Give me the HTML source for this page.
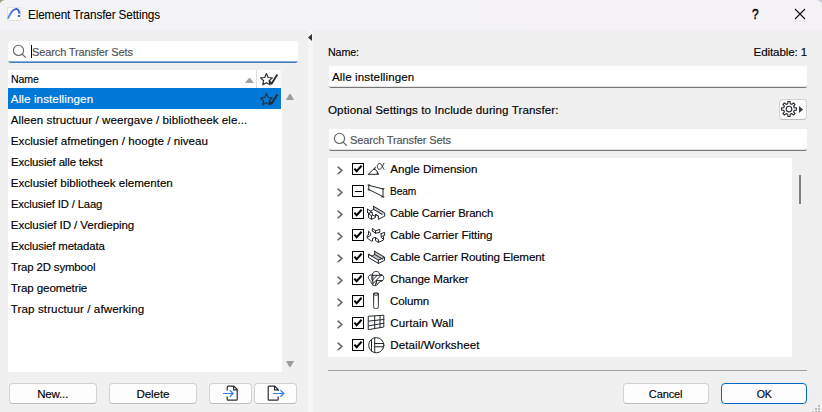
<!DOCTYPE html>
<html><head><meta charset="utf-8"><title>Element Transfer Settings</title>
<style>
*{box-sizing:border-box;margin:0;padding:0}
html,body{width:822px;height:412px;overflow:hidden}
body{background:#f0f0f0;font-family:"Liberation Sans",sans-serif;font-size:11.6px;color:#000;position:relative;-webkit-text-stroke:0.15px currentColor}
.abs{position:absolute}
svg{position:absolute;overflow:visible}
.t{position:absolute;white-space:nowrap;line-height:16px;height:16px;transform-origin:0 50%}
.btn span{display:inline-block;transform-origin:50% 50%}
#titlebar{left:0;top:0;width:822px;height:30px;background:linear-gradient(90deg,#f3f3f5,#f5f2f5)}
#divider{left:308px;top:30px;width:5px;height:382px;background:#f6f6f6}
.field{background:#fff;border-bottom:1px solid #777;border-radius:2px;box-shadow:inset 0 -1px 0 #e4e4e4}
.btn{position:absolute;height:21px;background:#fdfdfd;border:1px solid #d2d2d2;border-bottom-color:#bcbcbc;border-radius:4px;text-align:center;line-height:19px}
.cb{position:absolute;width:12px;height:12px;border:1px solid #000;background:#fff}
.ic{stroke:#23282c;fill:none;stroke-width:1;stroke-linecap:round;stroke-linejoin:round}
</style></head><body>
<div id="titlebar" class="abs"></div>
<div id="divider" class="abs"></div>
<svg style="left:0;top:0" width="6" height="4" viewBox="0 0 6 4"><path d="M0 0 H5 C2.5 0.3 0.5 1.5 0 3.5 Z" fill="#9a9d7c"></path></svg>
<svg style="left:814px;top:0" width="8" height="8" viewBox="0 0 8 8"><path d="M8 0 H2.6 C5.4 0.5 7.4 1.8 8 4 Z" fill="#c9c9d8"></path></svg>

<!-- title -->
<svg style="left:7px;top:7px" width="14" height="14" viewBox="0 0 14 14"><defs><linearGradient id="ag" x1="0" y1="1" x2="1" y2="0"><stop offset="0" stop-color="#5f93f2"></stop><stop offset="1" stop-color="#3558cc"></stop></linearGradient></defs><rect x="0.5" y="0.5" width="13" height="13" fill="#fff" stroke="#e2e2e2" stroke-width="1"></rect><path d="M1 11.6 C3.2 6.4 6.4 1.8 9.4 2 C11.2 2.2 12.1 4 12.3 6.6" fill="none" stroke="url(#ag)" stroke-width="1.9"></path><rect x="10.9" y="8.1" width="1.9" height="1.8" fill="#1c3fb4"></rect></svg>
<span class="t" style="left: 27.6px; top: 6.5px; font-size: 12.2px; -webkit-text-stroke: 0.05px rgb(0, 0, 0); letter-spacing: -0.15px; transform: scaleX(0.9675); margin-right: 0.15px;">Element Transfer Settings</span>
<span class="t" style="left: 751.7px; top: 6px; font-size: 14px; -webkit-text-stroke: 0.45px rgb(0, 0, 0); letter-spacing: -0.15px; transform: scaleX(0.8465); margin-right: 0.15px;">?</span>
<svg style="left:795px;top:9px" width="10" height="10" viewBox="0 0 10 10"><path d="M0 0 L10 10 M10 0 L0 10" stroke="#111" stroke-width="1.1" fill="none"></path></svg>

<!-- left search -->
<div class="abs" style="left:8px;top:41px;width:290px;height:22px;background:linear-gradient(#fff 20px,#86add3 20px,#86add3 21px,#3f7fbf 21px);border-radius:2px 2px 3px 3px"></div>
<svg style="left:12px;top:44px" width="16" height="16" viewBox="0 0 16 16"><circle cx="6.5" cy="6.4" r="5.1" fill="none" stroke="#666" stroke-width="1.1"></circle><path d="M10.2 10.2 L13.8 13.6" stroke="#666" stroke-width="1.2"></path></svg>
<div class="abs" style="left:31px;top:45px;width:1px;height:13px;background:#000"></div>
<span class="t" style="left: 31.8px; top: 44px; color: rgb(80, 80, 80); letter-spacing: -0.15px; transform: scaleX(0.9523); margin-right: 0.15px;">Search Transfer Sets</span>

<!-- left list -->
<div class="abs" style="left:8px;top:70px;width:274px;height:302px;background:#fff"></div>
<div class="abs" style="left:256px;top:70px;width:1px;height:18px;background:#e0e0e0"></div>
<div class="abs" style="left:280px;top:70px;width:2px;height:18px;background:#f6f6f6"></div>
<span class="t" style="left: 10.7px; top: 71px; letter-spacing: -0.15px; transform: scaleX(0.9118); margin-right: 0.15px;">Name</span>
<svg style="left:245px;top:78px" width="9" height="5" viewBox="0 0 9 5"><path d="M0 5 L4 0 H5 L9 5 Z" fill="#a0a0a0"></path></svg>
<svg style="left:259px;top:72px" width="20" height="15" viewBox="0 0 20 15"><path d="M7.40 1.60 L9.10 5.45 L13.30 5.88 L10.16 8.70 L11.04 12.82 L7.40 10.70 L3.76 12.82 L4.64 8.70 L1.50 5.88 L5.70 5.45 Z" fill="#fff" stroke="#2a2f33" stroke-width="1.15" stroke-linejoin="round"></path><path d="M10.2 9.2 L12.6 11.7 L18.3 2.6" fill="none" stroke="#23282c" stroke-width="1.8" stroke-linejoin="round"></path></svg>
<div class="abs" style="left:8px;top:88px;width:273px;height:21px;background:#0078d7"></div>
<svg style="left:259px;top:92px" width="20" height="15" viewBox="0 0 20 15"><path d="M7.40 1.60 L9.10 5.45 L13.30 5.88 L10.16 8.70 L11.04 12.82 L7.40 10.70 L3.76 12.82 L4.64 8.70 L1.50 5.88 L5.70 5.45 Z" fill="none" stroke="#2a2f33" stroke-width="1.15" stroke-linejoin="round"></path><path d="M10.2 9.2 L12.6 11.7 L18.3 2.6" fill="none" stroke="#23282c" stroke-width="1.8" stroke-linejoin="round"></path></svg>

<span class="t" style="left: 10.8px; top: 91px; color: rgb(255, 255, 255); letter-spacing: 0.109px; margin-right: -0.109px;">Alle instellingen</span>
<span class="t" style="left: 10.8px; top: 112px; letter-spacing: 0.052px; margin-right: -0.052px;">Alleen structuur / weergave / bibliotheek ele...</span>
<span class="t" style="left: 10.8px; top: 133px; letter-spacing: 0.034px; margin-right: -0.034px;">Exclusief afmetingen / hoogte / niveau</span>
<span class="t" style="left: 10.8px; top: 154px; letter-spacing: -0.15px; transform: scaleX(0.99); margin-right: 0.15px;">Exclusief alle tekst</span>
<span class="t" style="left: 10.8px; top: 175px; letter-spacing: -0.014px; margin-right: 0.014px;">Exclusief bibliotheek elementen</span>
<span class="t" style="left: 10.8px; top: 196px; letter-spacing: -0.15px; transform: scaleX(0.9716); margin-right: 0.15px;">Exclusief ID / Laag</span>
<span class="t" style="left: 10.8px; top: 217px; letter-spacing: -0.09px; margin-right: 0.09px;">Exclusief ID / Verdieping</span>
<span class="t" style="left: 10.8px; top: 238px; letter-spacing: -0.15px; transform: scaleX(0.9832); margin-right: 0.15px;">Exclusief metadata</span>
<span class="t" style="left: 10.8px; top: 259px; letter-spacing: -0.15px; transform: scaleX(0.9855); margin-right: 0.15px;">Trap 2D symbool</span>
<span class="t" style="left: 10.8px; top: 280px; letter-spacing: -0.13px; margin-right: 0.13px;">Trap geometrie</span>
<span class="t" style="left: 10.8px; top: 301px; letter-spacing: 0.099px; margin-right: -0.099px;">Trap structuur / afwerking</span>

<!-- scroll arrows -->
<svg style="left:286px;top:94px" width="8" height="6" viewBox="0 0 8 6"><path d="M0 6 L3.4 0 H4.6 L8 6 Z" fill="#9c9c9c"></path></svg>
<svg style="left:286px;top:361px" width="8" height="6" viewBox="0 0 8 6"><path d="M0 0 H8 L4.6 6 H3.4 Z" fill="#9c9c9c"></path></svg>

<!-- left buttons -->
<div class="btn" style="left:9px;top:383px;width:88px"><span style="letter-spacing: -0.15px; transform: scaleX(0.9915); margin-right: 0.15px;">New...</span></div>
<div class="btn" style="left:109px;top:383px;width:88px"><span style="letter-spacing: -0.103px; margin-right: 0.103px;">Delete</span></div>
<div class="btn" style="left:209px;top:383px;width:43px"></div>
<div class="btn" style="left:254px;top:383px;width:43px"></div>
<svg style="left:222px;top:385px" width="18" height="17" viewBox="0 0 18 17"><path d="M5.2 5.5 V2.2 Q5.2 1.2 6.2 1.2 H11.8 L15.2 4.6 V14.2 Q15.2 15.2 14.2 15.2 H6.2 Q5.2 15.2 5.2 14.2 V11.5 M11.6 1.4 V4.8 H15" fill="none" stroke="#2a2f33" stroke-width="1.2"></path><path d="M1 8.5 H11 M7.8 5.2 L11.2 8.5 L7.8 11.8" fill="none" stroke="#2f80ed" stroke-width="1.2"></path></svg>
<svg style="left:266px;top:385px" width="20" height="17" viewBox="0 0 20 17"><path d="M12.2 6 V4.6 L8.8 1.2 H3.2 Q2.2 1.2 2.2 2.2 V14.2 Q2.2 15.2 3.2 15.2 H11.2 Q12.2 15.2 12.2 14.2 V11.5 M8.6 1.4 V4.8 H12" fill="none" stroke="#2a2f33" stroke-width="1.2"></path><path d="M7 8.5 H17.6 M14.4 5.2 L17.8 8.5 L14.4 11.8" fill="none" stroke="#2f80ed" stroke-width="1.2"></path></svg>

<!-- collapse arrow -->
<svg style="left:308px;top:34px" width="4" height="7" viewBox="0 0 4 7"><path d="M4 0 L0 3.5 L4 7 Z" fill="#333"></path></svg>

<!-- right -->
<span class="t" style="left: 328px; top: 44px; letter-spacing: -0.15px; transform: scaleX(0.9238); margin-right: 0.15px;">Name:</span>
<span class="t" style="left: 753.6px; top: 44px; letter-spacing: -0.12px; margin-right: 0.12px;">Editable: 1</span>
<div class="abs field" style="left:329px;top:66px;width:478px;height:22px"></div>
<span class="t" style="left: 332px; top: 69px; letter-spacing: 0.109px; margin-right: -0.109px;">Alle instellingen</span>
<span class="t" style="left: 328px; top: 102px; letter-spacing: 0.097px; margin-right: -0.097px;">Optional Settings to Include during Transfer:</span>
<div class="btn" style="left:779px;top:99px;width:28px;height:21px;border-radius:4px"></div>
<svg style="left:781px;top:101px" width="16" height="16" viewBox="-8 -8 16 16"><path d="M-1.21 -5.26 L-1.11 -7.42 A7.50 7.50 0 0 1 1.11 -7.42 L1.21 -5.26 A5.40 5.40 0 0 1 2.86 -4.58 L4.46 -6.03 A7.50 7.50 0 0 1 6.03 -4.46 L4.58 -2.86 A5.40 5.40 0 0 1 5.26 -1.21 L7.42 -1.11 A7.50 7.50 0 0 1 7.42 1.11 L5.26 1.21 A5.40 5.40 0 0 1 4.58 2.86 L6.03 4.46 A7.50 7.50 0 0 1 4.46 6.03 L2.86 4.58 A5.40 5.40 0 0 1 1.21 5.26 L1.11 7.42 A7.50 7.50 0 0 1 -1.11 7.42 L-1.21 5.26 A5.40 5.40 0 0 1 -2.86 4.58 L-4.46 6.03 A7.50 7.50 0 0 1 -6.03 4.46 L-4.58 2.86 A5.40 5.40 0 0 1 -5.26 1.21 L-7.42 1.11 A7.50 7.50 0 0 1 -7.42 -1.11 L-5.26 -1.21 A5.40 5.40 0 0 1 -4.58 -2.86 L-6.03 -4.46 A7.50 7.50 0 0 1 -4.46 -6.03 L-2.86 -4.58 A5.40 5.40 0 0 1 -1.21 -5.26 Z" fill="none" stroke="#2a2f33" stroke-width="1.15" stroke-linejoin="round"></path><circle cx="0" cy="0" r="2.8" fill="none" stroke="#2a2f33" stroke-width="1.15"></circle></svg>
<svg style="left:799px;top:106px" width="4" height="7" viewBox="0 0 4 7"><path d="M0 0 L4 3.5 L0 7 Z" fill="#333"></path></svg>
<div class="abs field" style="left:329px;top:129px;width:478px;height:22px"></div>
<svg style="left:333px;top:132px" width="16" height="16" viewBox="0 0 16 16"><circle cx="6.5" cy="6.4" r="5.1" fill="none" stroke="#666" stroke-width="1.1"></circle><path d="M10.2 10.2 L13.8 13.6" stroke="#666" stroke-width="1.2"></path></svg>
<span class="t" style="left: 350.2px; top: 132px; color: rgb(80, 80, 80); letter-spacing: -0.15px; transform: scaleX(0.9523); margin-right: 0.15px;">Search Transfer Sets</span>

<!-- tree -->
<div class="abs" style="left:328px;top:158px;width:464px;height:199px;background:#fff"></div>
<div class="abs" style="left:799px;top:175px;width:2px;height:29px;background:#808080"></div>
<div class="abs" style="left:328px;top:370px;width:479px;height:1px;background:#a0a0a0"></div>

<svg style="left:337px;top:166px" width="6" height="9" viewBox="0 0 6 9"><path d="M0.6 0.6 L4.9 4.4 L0.6 8.2" fill="none" stroke="#666" stroke-width="1.5"></path></svg>
<div class="cb" style="left:352px;top:163px"></div>
<svg style="left:352px;top:163px" width="12" height="12" viewBox="0 0 12 12"><path d="M2.4 5.6 L4.6 8.2 L9.6 2.8" fill="none" stroke="#000" stroke-width="2"></path></svg>
<svg style="left:364px;top:158px" width="26" height="22" viewBox="0 0 26 22"><path class="ic" d="M4.4 16.3 H14.4 M4.4 16.3 L11.6 9.2 M10.2 10.8 Q13.4 12 14 15.4" stroke-width="1.15"></path><path d="M13.2 13.4 L15 16 L12.4 15.6 Z M9.6 11.8 L10.4 9.6 L12 11.4Z" fill="#23282c"></path><path class="ic" d="M19.9 5.4 C18.2 8.6 17.2 11.3 15.6 11.3 C14 11.3 13.3 9.9 13.3 8.4 C13.3 6.8 14.2 5.5 15.7 5.5 C17.4 5.5 18.2 8.6 20 11.4" stroke-width="1.15"></path></svg>
<svg style="left:337px;top:188px" width="6" height="9" viewBox="0 0 6 9"><path d="M0.6 0.6 L4.9 4.4 L0.6 8.2" fill="none" stroke="#666" stroke-width="1.5"></path></svg>
<div class="cb" style="left:352px;top:185px"></div>
<div class="abs" style="left:354.5px;top:191px;width:7px;height:1px;background:#000"></div>
<svg style="left:364px;top:180px" width="26" height="22" viewBox="0 0 26 22"><path class="ic" d="M4.8 5.1 V9.8 M4 5.1 H5.7 M4 9.8 H5.7 M4.8 5.3 L19 9 M4.8 9.5 L19 16.6 M19 8.8 V16.9 M18 8.8 H20 M17.6 16.9 H20" stroke-width="1.2"></path></svg>
<svg style="left:337px;top:210px" width="6" height="9" viewBox="0 0 6 9"><path d="M0.6 0.6 L4.9 4.4 L0.6 8.2" fill="none" stroke="#666" stroke-width="1.5"></path></svg>
<div class="cb" style="left:352px;top:207px"></div>
<svg style="left:352px;top:207px" width="12" height="12" viewBox="0 0 12 12"><path d="M2.4 5.6 L4.6 8.2 L9.6 2.8" fill="none" stroke="#000" stroke-width="2"></path></svg>
<svg style="left:364px;top:202px" width="26" height="22" viewBox="0 0 26 22"><path class="ic" d="M9.6 4.3 L20.7 10.9 V14.2 L14.4 17.3 V14.1 L11.5 12.5 V15.5 L7.5 17.3 L4.5 15.5 V11.6 M9.6 4.3 V7.4 L18.2 12.5 M3.5 7.2 V10.4 M3.5 7.2 L6.9 9.1 L9.5 7.4 M3.5 10.4 L5.4 11.4 M4.5 11.6 L6.6 10.5 L8.3 10.4 V13 L11.5 14.4 M7.5 17.3 V14 L4.5 11.6 M7.5 14 L8.3 13 M6.9 9.1 V10.5 M11.5 12.5 L14.4 14.1" stroke-width="1.2"></path><path d="M9.6 4.3 L20.7 10.9 V12.4 L18.2 12.5 L9.6 7.4 Z" fill="#23282c" fill-opacity="0.28"></path></svg>
<svg style="left:337px;top:232px" width="6" height="9" viewBox="0 0 6 9"><path d="M0.6 0.6 L4.9 4.4 L0.6 8.2" fill="none" stroke="#666" stroke-width="1.5"></path></svg>
<div class="cb" style="left:352px;top:229px"></div>
<svg style="left:352px;top:229px" width="12" height="12" viewBox="0 0 12 12"><path d="M2.4 5.6 L4.6 8.2 L9.6 2.8" fill="none" stroke="#000" stroke-width="2"></path></svg>
<svg style="left:364px;top:224px" width="26" height="22" viewBox="0 0 26 22"><path class="ic" d="M8.3 6.9 L8.3 4.3 L11.5 6.8 L15.8 5.3 L15.8 8.3 L11.5 9.2 L8.3 6.9 M11.5 6.8 L11.5 9.2 M17.1 9.6 L20.6 8.3 L20.6 11.5 L17.1 12.5 L17.1 9.6 M17.1 13.3 L19.5 15.4 L19.5 12.7 M4.5 10.7 L4.5 7.2 L6.7 9.1 L6.7 11.3 L3.7 13.1 M4.5 10.7 L3.2 11.5 L3.2 14.1 L7.5 17.1 L8.5 17.1 L8.5 14.4 L11.2 13.3 L14.4 15.5 L14.4 18.4 L19.5 16.0 L19.5 15.4 M11.5 13.8 L11.5 16.6 L14.4 18.4" stroke-width="1.2"></path></svg>
<svg style="left:337px;top:254px" width="6" height="9" viewBox="0 0 6 9"><path d="M0.6 0.6 L4.9 4.4 L0.6 8.2" fill="none" stroke="#666" stroke-width="1.5"></path></svg>
<div class="cb" style="left:352px;top:251px"></div>
<svg style="left:352px;top:251px" width="12" height="12" viewBox="0 0 12 12"><path d="M2.4 5.6 L4.6 8.2 L9.6 2.8" fill="none" stroke="#000" stroke-width="2"></path></svg>
<svg style="left:364px;top:246px" width="26" height="22" viewBox="0 0 26 22"><path class="ic" d="M10.7 5.3 L20.6 11.2 V14.4 L14.4 17.4 L4.5 11.5 V8.3 L14.4 14.1 V17.4 M10.7 5.3 V8.5 L18.4 13.1 M4.5 8.3 L8 10.1 L10.7 8.5 M14.4 14.1 L20.3 11.4" stroke-width="1.2"></path><path d="M10.7 5.3 L20.6 11.2 V12.8 L18.4 13.1 L10.7 8.5 Z M8 10.1 L10.7 8.5 L18.4 13.1 L14.4 14.1 Z" fill="#23282c" fill-opacity="0.28"></path></svg>
<svg style="left:337px;top:276px" width="6" height="9" viewBox="0 0 6 9"><path d="M0.6 0.6 L4.9 4.4 L0.6 8.2" fill="none" stroke="#666" stroke-width="1.5"></path></svg>
<div class="cb" style="left:352px;top:273px"></div>
<svg style="left:352px;top:273px" width="12" height="12" viewBox="0 0 12 12"><path d="M2.4 5.6 L4.6 8.2 L9.6 2.8" fill="none" stroke="#000" stroke-width="2"></path></svg>
<svg style="left:364px;top:268px" width="26" height="22" viewBox="0 0 26 22"><path class="ic" d="M8.2 7 C8.6 2.2 15.4 2.2 15.8 6.6 C20.4 6 21 12 17.6 13.2 C15.4 13.4 14.8 14.4 14 15.8 C12.4 18.4 9 18.4 7.6 15.6 C7 14 7.2 13.4 5.8 12.2 C3.2 10.4 4 6 8.2 7 Z M8.8 7.3 H18.4 M8.8 7.3 V17 M9 11.6 L13 7.5 M9 15.6 L16.8 7.7 M11.4 17 L12.6 13 M12.8 12.6 H18.6 M12.8 12.6 C12.2 14 12.6 15.4 13 16.2 M8.4 7.2 C7.2 9 7.6 11.4 8.6 13" stroke-width="1.15"></path></svg>
<svg style="left:337px;top:298px" width="6" height="9" viewBox="0 0 6 9"><path d="M0.6 0.6 L4.9 4.4 L0.6 8.2" fill="none" stroke="#666" stroke-width="1.5"></path></svg>
<div class="cb" style="left:352px;top:295px"></div>
<svg style="left:352px;top:295px" width="12" height="12" viewBox="0 0 12 12"><path d="M2.4 5.6 L4.6 8.2 L9.6 2.8" fill="none" stroke="#000" stroke-width="2"></path></svg>
<svg style="left:364px;top:290px" width="26" height="22" viewBox="0 0 26 22"><defs><linearGradient id="cg" x1="0" y1="0" x2="0" y2="1"><stop offset="0" stop-color="#23282c"></stop><stop offset="1" stop-color="#70757a"></stop></linearGradient></defs><path d="M9.6 4.2 C9.6 2.4 14.4 2.4 14.4 4.2 V16.4 C14.4 19.2 9.6 19.2 9.6 16.4 Z" fill="none" stroke="url(#cg)" stroke-width="1.2"></path><path class="ic" d="M9.6 4.2 C9.6 5.8 14.4 5.8 14.4 4.2" stroke-width="1.1"></path></svg>
<svg style="left:337px;top:320px" width="6" height="9" viewBox="0 0 6 9"><path d="M0.6 0.6 L4.9 4.4 L0.6 8.2" fill="none" stroke="#666" stroke-width="1.5"></path></svg>
<div class="cb" style="left:352px;top:317px"></div>
<svg style="left:352px;top:317px" width="12" height="12" viewBox="0 0 12 12"><path d="M2.4 5.6 L4.6 8.2 L9.6 2.8" fill="none" stroke="#000" stroke-width="2"></path></svg>
<svg style="left:364px;top:312px" width="26" height="22" viewBox="0 0 26 22"><path class="ic" d="M4.6 4.3 L19.8 3.2 V15 L4.6 17.6 Z M10.7 3.9 V16.5 M16 3.5 V15.6 M4.6 9.1 L19.8 7.5 M4.6 13.9 L19.8 11.2" stroke-width="1.2"></path></svg>
<svg style="left:337px;top:342px" width="6" height="9" viewBox="0 0 6 9"><path d="M0.6 0.6 L4.9 4.4 L0.6 8.2" fill="none" stroke="#666" stroke-width="1.5"></path></svg>
<div class="cb" style="left:352px;top:339px"></div>
<svg style="left:352px;top:339px" width="12" height="12" viewBox="0 0 12 12"><path d="M2.4 5.6 L4.6 8.2 L9.6 2.8" fill="none" stroke="#000" stroke-width="2"></path></svg>
<svg style="left:364px;top:334px" width="26" height="22" viewBox="0 0 26 22"><circle class="ic" cx="12.3" cy="11.2" r="7.6" stroke-width="1.2"></circle><path class="ic" d="M7.5 5.4 V17 M10.7 3.8 V18.6 M10.7 9.5 H19.7 M10.7 12.8 H19.7" stroke-width="1.2"></path></svg>

<span class="t" style="left: 390.3px; top: 161px; letter-spacing: -0.033px; margin-right: 0.033px;">Angle Dimension</span>
<span class="t" style="left: 390.3px; top: 183px; letter-spacing: -0.15px; transform: scaleX(0.8778); margin-right: 0.15px;">Beam</span>
<span class="t" style="left: 390.3px; top: 205px; letter-spacing: -0.15px; transform: scaleX(0.9731); margin-right: 0.15px;">Cable Carrier Branch</span>
<span class="t" style="left: 390.3px; top: 227px; letter-spacing: -0.077px; margin-right: 0.077px;">Cable Carrier Fitting</span>
<span class="t" style="left: 390.3px; top: 249px; letter-spacing: -0.121px; margin-right: 0.121px;">Cable Carrier Routing Element</span>
<span class="t" style="left: 390.3px; top: 271px; letter-spacing: -0.126px; margin-right: 0.126px;">Change Marker</span>
<span class="t" style="left: 390.3px; top: 293px; letter-spacing: -0.15px; transform: scaleX(0.9999); margin-right: 0.15px;">Column</span>
<span class="t" style="left: 390.3px; top: 315px; letter-spacing: 0.062px; margin-right: -0.062px;">Curtain Wall</span>
<span class="t" style="left: 390.3px; top: 337px; letter-spacing: 0.075px; margin-right: -0.075px;">Detail/Worksheet</span>

<!-- bottom buttons -->
<div class="btn" style="left:623px;top:383px;width:86px"><span style="letter-spacing: -0.15px; transform: scaleX(0.9563); margin-right: 0.15px;">Cancel</span></div>
<div class="btn" style="left:721px;top:383px;width:86px;border:1.5px solid #0067c0;line-height:19.5px"><span style="letter-spacing: -0.15px; transform: scaleX(0.9148); margin-right: 0.15px;">OK</span></div>
<svg style="left:810px;top:402px" width="12" height="10" viewBox="0 0 12 10" fill="#b9b9b9"><rect x="8" y="3" width="2" height="2"></rect><rect x="5" y="6" width="2" height="2"></rect><rect x="8" y="6" width="2" height="2"></rect><rect x="2" y="9" width="2" height="1"></rect><rect x="5" y="9" width="2" height="1"></rect><rect x="8" y="9" width="2" height="1"></rect></svg>

</body></html>
